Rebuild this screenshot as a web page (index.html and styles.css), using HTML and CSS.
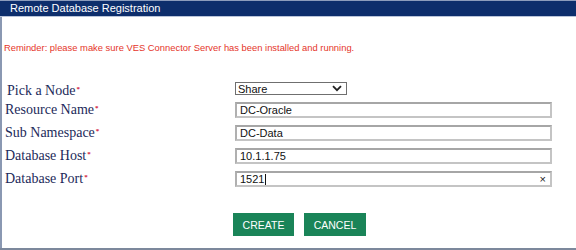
FILE: index.html
```html
<!DOCTYPE html>
<html lang="en">
<head>
<meta charset="utf-8">
<title>Remote Database Registration</title>
<link rel="stylesheet" href="styles.css">
</head>
<body>
<div class="panel">
  <div class="title">Remote Database Registration</div>
  <div class="body">
    <p class="reminder">Reminder: please make sure VES Connector Server has been installed and running.</p>
    <form class="form">
      <label class="label label-first">Pick a Node<span class="req">*</span></label>
      <div class="ctrl ctrl-first">
        <div class="select">
          <span class="select-text">Share</span>
          <svg class="chev" width="10" height="7" viewBox="0 0 10 7"><path d="M1 1.2 L5 5.2 L9 1.2" fill="none" stroke="#222" stroke-width="1.8"/></svg>
        </div>
      </div>
      <label class="label">Resource Name<span class="req">*</span></label>
      <div class="ctrl"><div class="field">DC-Oracle</div></div>
      <label class="label">Sub Namespace<span class="req">*</span></label>
      <div class="ctrl"><div class="field">DC-Data</div></div>
      <label class="label">Database Host<span class="req">*</span></label>
      <div class="ctrl"><div class="field">10.1.1.75</div></div>
      <label class="label">Database Port<span class="req">*</span></label>
      <div class="ctrl"><div class="field field-active">1521<span class="caret"></span><span class="clear">×</span></div></div>
    </form>
    <div class="actions">
      <button type="button" class="btn">CREATE</button>
      <button type="button" class="btn">CANCEL</button>
    </div>
  </div>
</div>
</body>
</html>
```

FILE: styles.css
```css
html, body {
  margin: 0;
  padding: 0;
  background: #ffffff;
}
.panel {
  width: 576px;
  height: 250px;
  box-sizing: border-box;
  border-bottom: 2px solid #7c889c;
  display: flex;
  flex-direction: column;
}
.title {
  height: 17px;
  box-sizing: border-box;
  background: #0d2e6c;
  border-top: 1px solid #8c9cbc;
  border-bottom: 1px solid #b9c4d9;
  color: #ffffff;
  font-family: "Liberation Sans", Arial, sans-serif;
  font-size: 11px;
  line-height: 15px;
  padding-left: 10px;
}
.body {
  flex: 1;
  border-left: 2px solid #8a98b2;
  display: flex;
  flex-direction: column;
}
.reminder {
  margin: 25px 0 0 2px;
  color: #e5352a;
  font-family: "Liberation Sans", Arial, sans-serif;
  font-size: 9.4px;
  line-height: 12px;
}
.form {
  margin: 26px 0 0 0;
  display: grid;
  grid-template-columns: 233px 317px;
  grid-template-rows: 20px 23px 23px 23px 23px;
}
.label {
  font-family: "Liberation Serif", "Times New Roman", serif;
  font-size: 14px;
  line-height: 16px;
  color: #1c2a5a;
  padding-left: 3px;
}
.label-first {
  padding-left: 5px;
  padding-top: 1px;
}
.req {
  color: #d2173c;
  font-size: 7px;
  font-weight: bold;
  vertical-align: 4px;
  margin-left: 1px;
}
.ctrl {
  padding-top: 2px;
}
.select {
  width: 112px;
  height: 13px;
  box-sizing: border-box;
  border: 1px solid #6f6f6f;
  display: flex;
  align-items: center;
  justify-content: space-between;
  padding: 0 3px 0 2px;
  font-family: "Liberation Sans", Arial, sans-serif;
  font-size: 11px;
  color: #111;
}
.chev {
  margin-right: 1px;
}
.field {
  position: relative;
  width: 317px;
  height: 16px;
  box-sizing: border-box;
  border: 2px solid #c4c4c4;
  border-top-color: #a6a6a6;
  border-left-color: #b0b0b0;
  padding: 0 3px;
  font-family: "Liberation Sans", Arial, sans-serif;
  font-size: 11px;
  line-height: 12px;
  color: #111;
  display: flex;
  align-items: center;
}
.caret {
  display: inline-block;
  width: 1px;
  height: 11px;
  background: #111;
  margin-left: 1px;
}
.clear {
  position: absolute;
  right: 4px;
  top: 0;
  font-size: 11px;
  line-height: 12px;
  color: #222;
}
.actions {
  margin-top: 21px;
  display: flex;
  gap: 10px;
  padding-left: 231px;
}
.btn {
  width: 61px;
  height: 23px;
  border: none;
  background: #1a8458;
  color: #ffffff;
  font-family: "Liberation Sans", Arial, sans-serif;
  font-size: 10.5px;
  padding: 0;
  margin: 0;
}
.btn + .btn {
  width: 62px;
}
```
